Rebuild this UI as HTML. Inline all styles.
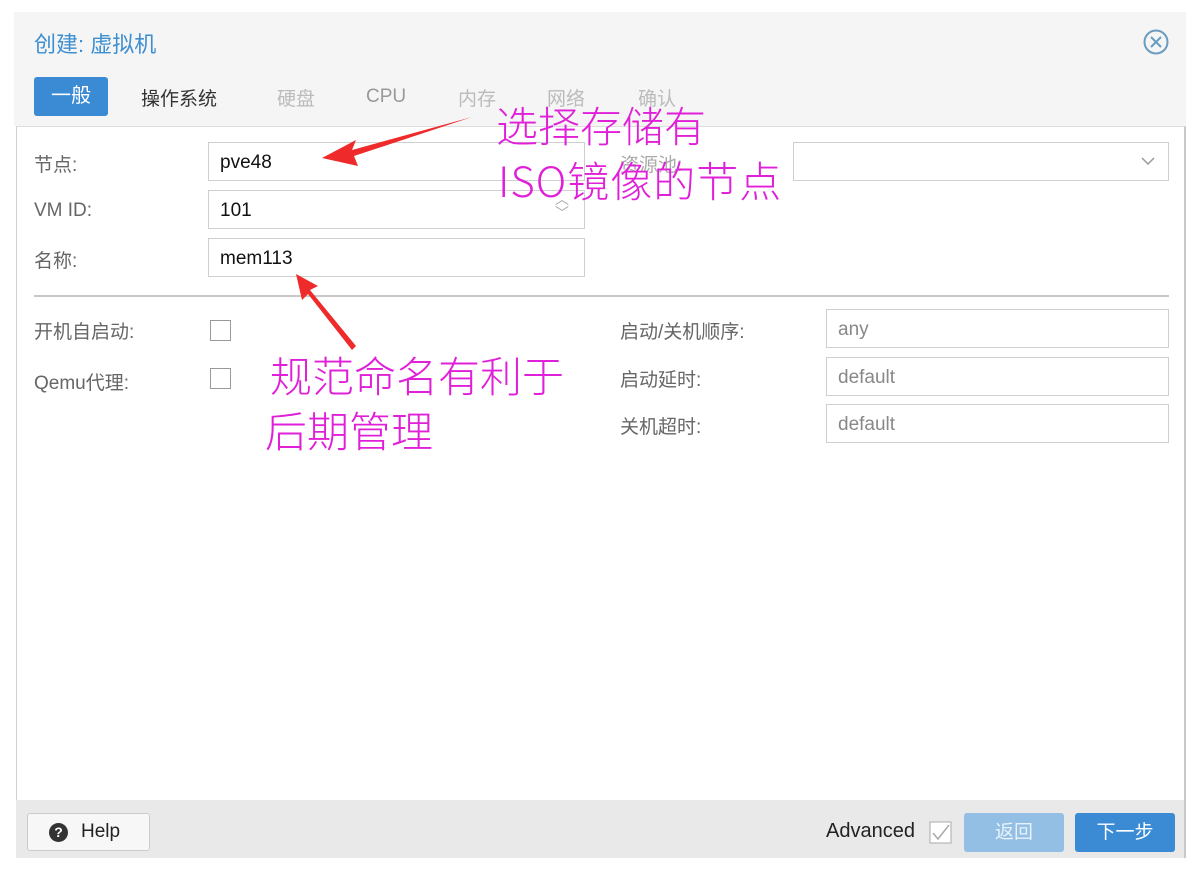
<!DOCTYPE html>
<html><head><meta charset="utf-8"><style>
*{margin:0;padding:0;box-sizing:border-box}
body{width:1200px;height:873px;background:#fff;position:relative;overflow:hidden;font-family:"Liberation Sans","Noto Sans CJK SC",sans-serif;}
.a{position:absolute}
.hdr{left:14px;top:12px;width:1172px;height:114px;background:#f5f5f5}
.body{left:16px;top:126px;width:1170px;height:674px;background:#fff;border-left:1px solid #d0d0d0;border-right:2px solid #c8c8c8;border-top:1px solid #ddd}
.ftr{left:16px;top:800px;width:1170px;height:58px;background:#e9e9e9;border-right:2px solid #c8c8c8}
.lbl{color:#666;font-size:19px}
.inp{background:#fff;border:1px solid #cfcfcf;height:39px;font-size:19px;color:#111;padding:9px 11px}
.ph{color:#888}
.cb{width:21px;height:21px;border:1px solid #999;background:#fff}
.mag{color:#e020d8;font-size:42px;line-height:50px;font-family:"Noto Sans CJK SC",sans-serif;font-weight:300}
.tab{font-size:19px;top:84px;color:#bbb}
</style></head><body>
<div class="a hdr"></div>
<div class="a" style="left:34px;top:27px;font-size:22px;color:#3d8fd0">创建: 虚拟机</div>
<svg class="a" style="left:1142px;top:28px" width="28" height="28" viewBox="0 0 28 28"><circle cx="14" cy="14" r="11.5" fill="none" stroke="#6a9cc0" stroke-width="2"/><path d="M9 9L19 19M19 9L9 19" stroke="#6a9cc0" stroke-width="2"/></svg>
<div class="a" style="left:34px;top:77px;width:74px;height:39px;background:#3a8ad4;border-radius:3px;color:#fff;font-size:20px;text-align:center;line-height:39px">一般</div>
<div class="a tab" style="left:141px;color:#333">操作系统</div>
<div class="a tab" style="left:277px">硬盘</div>
<div class="a tab" style="left:366px;color:#999;top:86px">CPU</div>
<div class="a tab" style="left:458px">内存</div>
<div class="a tab" style="left:547px">网络</div>
<div class="a tab" style="left:638px">确认</div>
<div class="a body"></div>
<div class="a lbl" style="left:34px;top:150px">节点:</div>
<div class="a inp" style="left:208px;top:142px;width:377px">pve48</div>
<div class="a lbl" style="left:34px;top:200px">VM ID:</div>
<div class="a inp" style="left:208px;top:190px;width:377px">101</div>
<div class="a" style="left:555px;top:192px;color:#aaa;font-size:14px;line-height:14px">︿<br>﹀</div>
<div class="a lbl" style="left:34px;top:246px">名称:</div>
<div class="a inp" style="left:208px;top:238px;width:377px">mem113</div>
<div class="a lbl" style="left:620px;top:150px;color:#aaa">资源池:</div>
<div class="a inp" style="left:793px;top:142px;width:376px"></div>
<svg class="a" style="left:1141px;top:156px" width="14" height="10"><path d="M1 2L7 8L13 2" fill="none" stroke="#999" stroke-width="1.5"/></svg>
<div class="a" style="left:34px;top:295px;width:1135px;height:2px;background:#c8c8c8"></div>
<div class="a lbl" style="left:34px;top:317px">开机自启动:</div>
<div class="a cb" style="left:210px;top:320px"></div>
<div class="a lbl" style="left:34px;top:368px">Qemu代理:</div>
<div class="a cb" style="left:210px;top:368px"></div>
<div class="a lbl" style="left:620px;top:317px">启动/关机顺序:</div>
<div class="a inp ph" style="left:826px;top:309px;width:343px">any</div>
<div class="a lbl" style="left:620px;top:365px">启动延时:</div>
<div class="a inp ph" style="left:826px;top:357px;width:343px">default</div>
<div class="a lbl" style="left:620px;top:412px">关机超时:</div>
<div class="a inp ph" style="left:826px;top:404px;width:343px">default</div>
<div class="a mag" style="left:496px;top:100px">选择存储有</div>
<div class="a mag" style="left:498px;top:155px;letter-spacing:1px">ISO镜像的节点</div>
<div class="a mag" style="left:270px;top:350px">规范命名有利于</div>
<div class="a mag" style="left:265px;top:405px">后期管理</div>
<svg class="a" style="left:0;top:0" width="1200" height="873"><path d="M472 117L352 150L356 140L322 158L358 166L354 156Z" fill="#ee2a2a"/><path d="M356 346L310 290L318 286L296 274L302 300L308 294L352 350Z" fill="#ee2a2a"/></svg>
<div class="a ftr"></div>
<div class="a" style="left:27px;top:813px;width:123px;height:38px;background:#f7f7f7;border:1px solid #ccc;border-radius:3px"></div>
<div class="a" style="left:49px;top:823px;width:19px;height:19px;border-radius:50%;background:#333;color:#fff;font-size:14px;font-weight:bold;text-align:center;line-height:19px">?</div>
<div class="a" style="left:81px;top:821px;font-size:19px;color:#222">Help</div>
<div class="a" style="left:826px;top:820px;font-size:20px;color:#222">Advanced</div>
<svg class="a" style="left:929px;top:821px" width="24" height="24"><rect x="1" y="1" width="21" height="21" fill="#fff" stroke="#aaa"/><path d="M4 12L9 18L20 4" fill="none" stroke="#aaa" stroke-width="1.5"/></svg>
<div class="a" style="left:964px;top:813px;width:100px;height:39px;background:#93bfe4;border-radius:3px;color:#e8f2fb;font-size:19px;text-align:center;line-height:39px">返回</div>
<div class="a" style="left:1075px;top:813px;width:100px;height:39px;background:#3a8ad4;border-radius:3px;color:#fff;font-size:19px;text-align:center;line-height:39px">下一步</div>
</body></html>
